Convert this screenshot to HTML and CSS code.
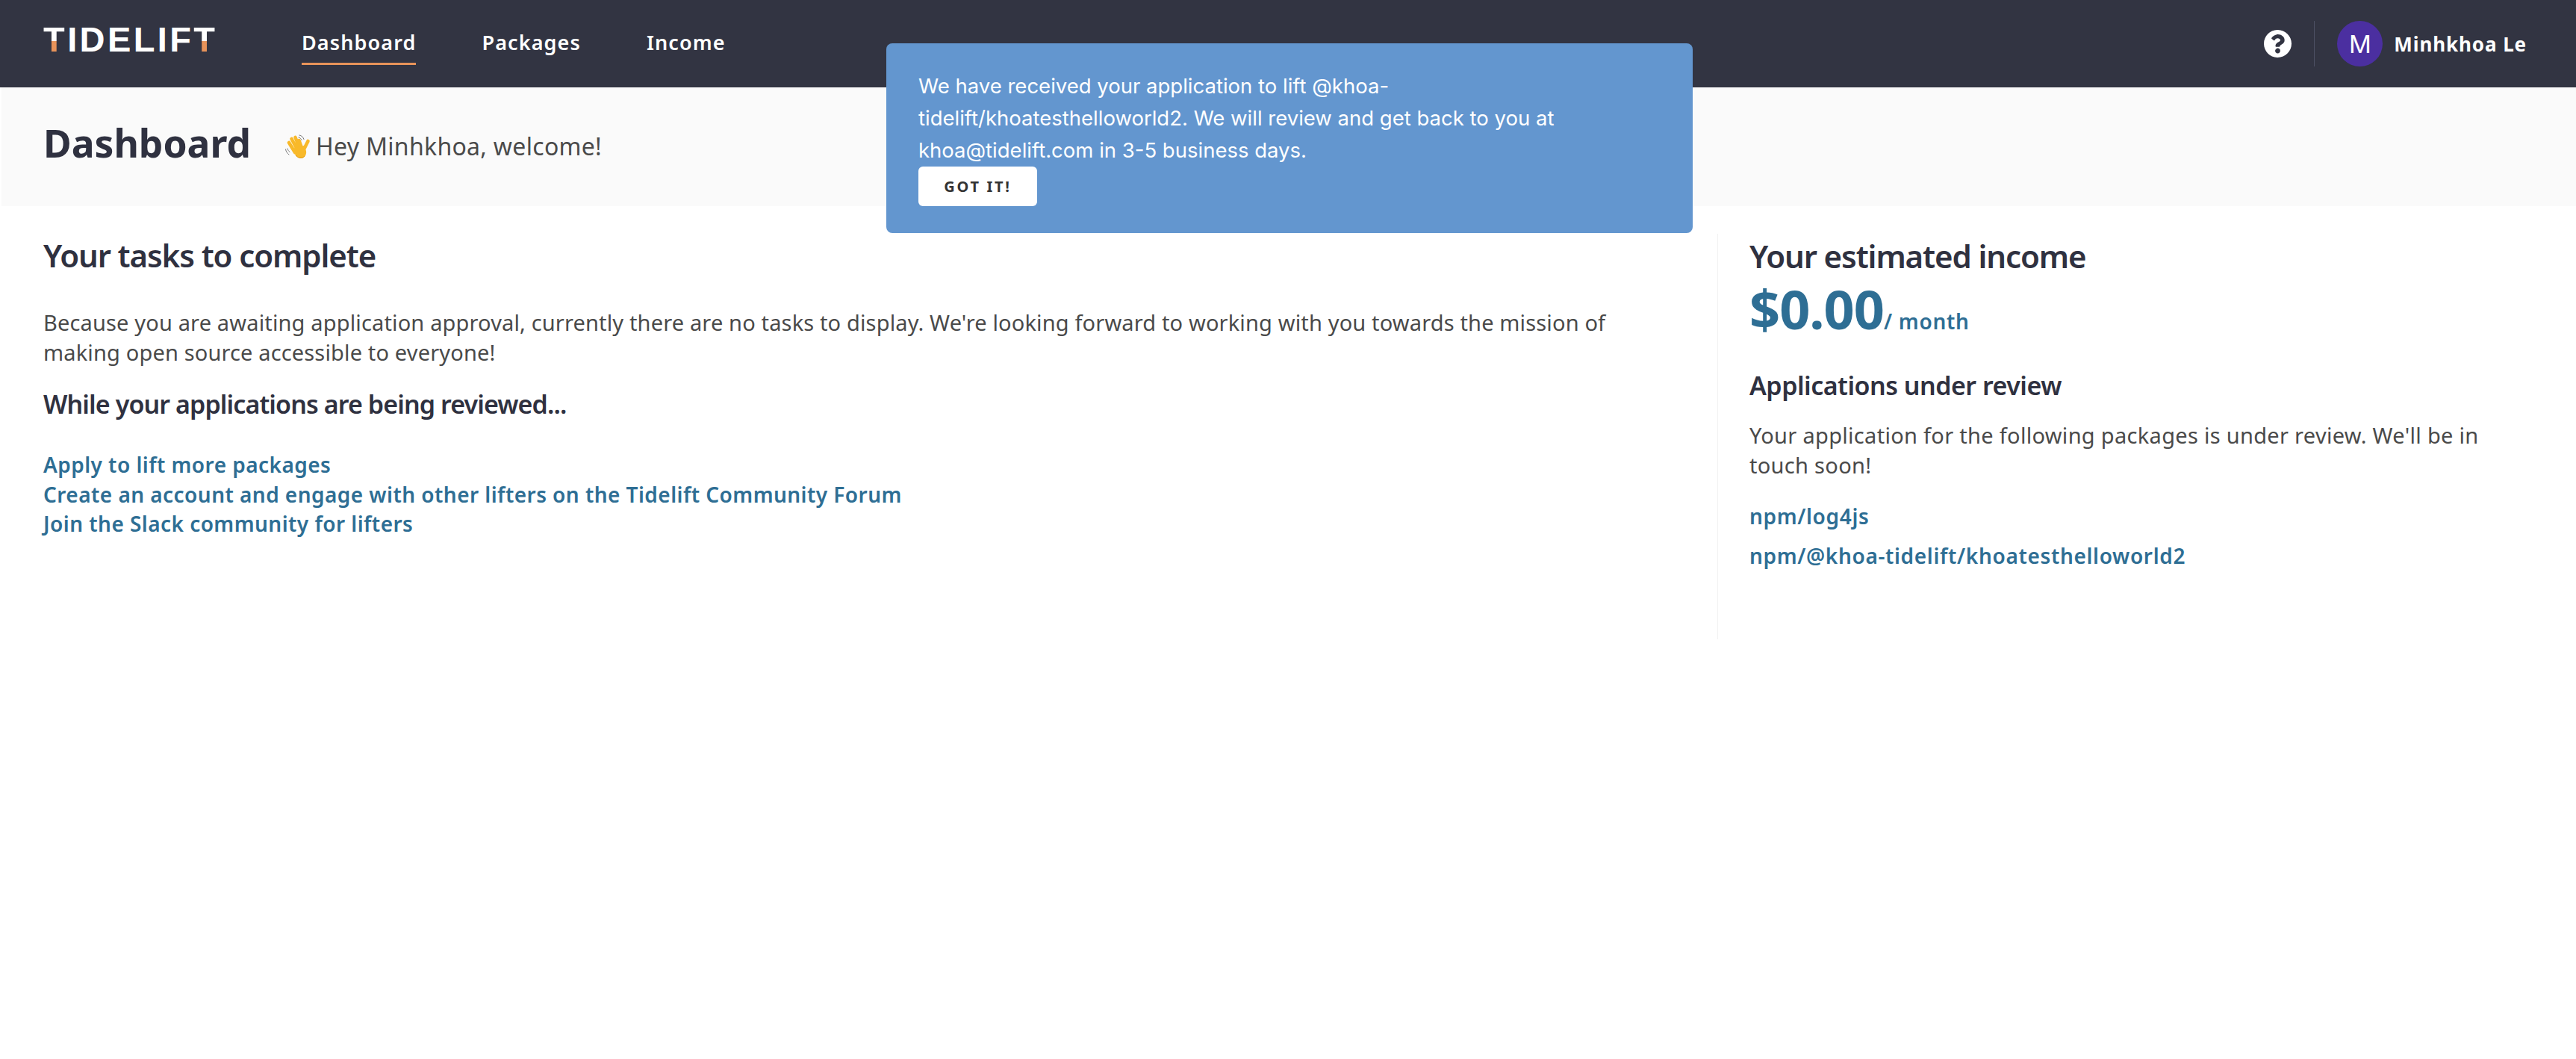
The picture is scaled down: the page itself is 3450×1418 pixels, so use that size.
FILE: index.html
```html
<!DOCTYPE html>
<html lang="en">
<head>
    <meta charset="UTF-8">
    <meta name="viewport" content="width=device-width, initial-scale=1.0">
    <title>Dashboard - Tidelift</title>
    <link rel="stylesheet" href="styles.css">
</head>
<body>

    <nav class="navbar">
        <a class="logo"><span class="logo-t">T</span>IDELIF<span class="logo-t">T</span></a>
        <div class="nav-links">
            <a class="nav-link active">Dashboard</a>
            <a class="nav-link">Packages</a>
            <a class="nav-link">Income</a>
        </div>
        <div class="nav-right">
            <svg class="help-icon" viewBox="8 8 496 496"><path fill="#fff" d="M504 256c0 136.997-111.043 248-248 248S8 392.997 8 256C8 119.083 119.043 8 256 8s248 111.083 248 248zM262.655 90c-54.497 0-89.255 22.957-116.549 63.758-3.536 5.286-2.353 12.415 2.715 16.258l34.699 26.31c5.205 3.947 12.621 3.008 16.665-2.122 17.864-22.658 30.113-35.797 57.303-35.797 20.429 0 45.698 13.148 45.698 32.958 0 14.976-12.363 22.667-32.534 33.976C247.128 238.528 216 254.941 216 296v4c0 6.627 5.373 12 12 12h56c6.627 0 12-5.373 12-12v-1.333c0-28.462 83.186-29.647 83.186-106.667 0-58.002-60.165-102-116.531-102zM256 338c-25.365 0-46 20.635-46 46 0 25.364 20.635 46 46 46s46-20.636 46-46c0-25.365-20.635-46-46-46z"/></svg>
            <div class="nav-divider"></div>
            <div class="avatar">M</div>
            <span class="user-name">Minhkhoa Le</span>
        </div>
    </nav>

    <div class="toast">
        <p>We have received your application to lift @khoa-<br>tidelift/khoatesthelloworld2. We will review and get back to you at<br>khoa@tidelift.com in 3-5 business days.</p>
        <button class="toast-button">GOT IT!</button>
    </div>

    <header class="page-header">
        <h1>Dashboard</h1>
        <svg class="wave" viewBox="0 0 38 38">
            <g fill="none" stroke="#777" stroke-width="1" stroke-linecap="round">
                <path d="M21 3c3 .6 5 2.500 6 5.500M20 6c2 .5 3.300 1.800 4 3.500"/>
                <path d="M2.500 22c.6 3 2 5 4.500 7M5 21c.5 1.800 1.500 3.200 3 4.500"/>
            </g>
            <g fill="none" stroke="#f8b92a" stroke-width="4.600" stroke-linecap="round">
                <path d="M15 26L7 13M18 22L10.500 8M21 20L15.500 6M24 20L20.500 10M26 24L32.500 11"/>
            </g>
            <path fill="#f8b92a" d="M11 21L27 17L30 24C31 30 27 34 23 34C19 34 15 30 11 21z"/>
            <path fill="none" stroke="#e39a10" stroke-width="1" stroke-linecap="round" d="M16 30C19 34 25 35 28 31"/>
        </svg>
        <span class="welcome">Hey Minhkhoa, welcome!</span>
    </header>

    <main class="content">
        <section class="tasks">
            <h2>Your tasks to complete</h2>
            <p>Because you are awaiting application approval, currently there are no tasks to display. We're looking forward to working with you towards the mission of making open source accessible to everyone!</p>
            <h3>While your applications are being reviewed...</h3>
            <ul class="task-links">
                <li><a>Apply to lift more packages</a></li>
                <li><a>Create an account and engage with other lifters on the Tidelift Community Forum</a></li>
                <li><a>Join the Slack community for lifters</a></li>
            </ul>
        </section>

        <aside class="sidebar">
            <h2>Your estimated income</h2>
            <div class="income"><span class="amount">$0.00</span><span class="per-month">/ month</span></div>
            <h4>Applications under review</h4>
            <p>Your application for the following packages is under review. We'll be in touch soon!</p>
            <a class="package">npm/log4js</a>
            <a class="package">npm/@khoa-tidelift/khoatesthelloworld2</a>
        </aside>
    </main>

</body>
</html>
```
FILE: styles.css
```css
body {
    font-family: "Noto Sans", Arial, sans-serif;
    background-color: white;
    color: #4a4a4a;
    margin: 0;
}
h1, h2, h3, h4, p, ul {
    margin: 0;
    padding: 0;
}
.navbar {
    display: flex;
    align-items: center;
    height: 117px;
    background: #323442;
    color: white;
    padding: 0 66px 0 58px;
}
.logo {
    width: 346px;
    margin-top: -12px;
    font-family: "Liberation Sans", Arial, sans-serif;
    font-size: 47px;
    font-weight: bold;
    letter-spacing: 3.4px;
    line-height: 1;
}
.logo-t {
    background: linear-gradient(172deg, white 54%, #e8935a 54%);
    -webkit-background-clip: text;
    background-clip: text;
    color: transparent;
}
.nav-links {
    display: flex;
    gap: 88px;
}
.nav-link {
    display: block;
    padding: 4px 0 8px;
    margin-top: 4px;
    border-bottom: 3px solid transparent;
    font-size: 27px;
    font-weight: 600;
    letter-spacing: 1.1px;
    line-height: 38px;
}
.nav-link.active {
    border-bottom-color: #e8935a;
}
.nav-right {
    display: flex;
    align-items: center;
    margin-left: auto;
}
.help-icon {
    width: 37px;
    height: 37px;
}
.nav-divider {
    width: 1px;
    height: 61px;
    margin: 0 30px;
    background: #4d5064;
}
.avatar {
    display: flex;
    align-items: center;
    justify-content: center;
    width: 61px;
    height: 61px;
    border-radius: 50%;
    background: #4b2fa0;
    font-family: "Inter", sans-serif;
    font-size: 33px;
}
.user-name {
    margin-left: 15px;
    font-size: 26px;
    font-weight: 700;
    letter-spacing: 0.9px;
}
.toast {
    position: absolute;
    left: 1187px;
    top: 58px;
    box-sizing: border-box;
    width: 1080px;
    height: 254px;
    padding: 36px 43px;
    background: #6396cf;
    border-radius: 8px;
    color: white;
    font-family: "Inter", sans-serif;
    font-size: 27.5px;
    line-height: 43px;
}
.toast-button {
    display: block;
    width: 159px;
    height: 53px;
    background: white;
    border: none;
    border-radius: 6px;
    color: #333;
    font-family: "Noto Sans", sans-serif;
    font-size: 20px;
    font-weight: 700;
    letter-spacing: 2.7px;
}
.page-header {
    display: flex;
    align-items: center;
    height: 159px;
    margin-left: 2px;
    padding-left: 56px;
    background: #fafafa;
}
.page-header h1 {
    width: 322px;
    margin-top: -12px;
    color: #2f3140;
    font-size: 51.5px;
    font-weight: 700;
}
.wave {
    width: 38px;
    height: 38px;
}
.welcome {
    margin-left: 5px;
    margin-top: -3px;
    font-size: 32px;
    letter-spacing: 0.3px;
}
.content {
    display: flex;
    align-items: flex-start;
    padding-left: 58px;
}
.tasks {
    flex: none;
    width: 2130px;
    padding-top: 36px;
    padding-right: 20px;
    box-sizing: border-box;
}
h2 {
    color: #2f3140;
    font-size: 42px;
    font-weight: 600;
    line-height: 60px;
    letter-spacing: -1.1px;
}
.tasks p {
    margin-top: 40px;
    font-size: 29px;
    line-height: 40px;
    letter-spacing: 0.15px;
}
.tasks h3 {
    margin-top: 24px;
    color: #2f3140;
    font-size: 34px;
    font-weight: 600;
    line-height: 50px;
    letter-spacing: -0.9px;
}
.task-links {
    margin-top: 37px;
    list-style: none;
}
.task-links a, .package {
    display: block;
    color: #2e6e94;
    font-size: 28px;
    font-weight: 600;
    letter-spacing: 0.45px;
    line-height: 39.500px;
}
.sidebar {
    flex: none;
    box-sizing: border-box;
    width: 1150px;
    min-height: 543px;
    margin-top: 37px;
    margin-left: 112px;
    padding: 0 90px 0 42px;
    border-left: 1px solid #f2f2f2;
}
.income {
    color: #2e6e94;
    line-height: 80px;
}
.amount {
    font-size: 72px;
    font-weight: 700;
    letter-spacing: -1px;
}
.per-month {
    font-size: 28px;
    font-weight: 600;
    letter-spacing: 0.7px;
}
.sidebar h4 {
    margin-top: 17px;
    color: #2f3140;
    font-size: 34px;
    font-weight: 600;
    line-height: 48px;
    letter-spacing: -0.5px;
}
.sidebar p {
    margin-top: 23px;
    font-size: 29px;
    line-height: 40px;
    letter-spacing: 0.3px;
}
.package {
    margin-top: 13px;
    letter-spacing: 0.65px;
}
.sidebar p + .package {
    margin-top: 29px;
}
```
